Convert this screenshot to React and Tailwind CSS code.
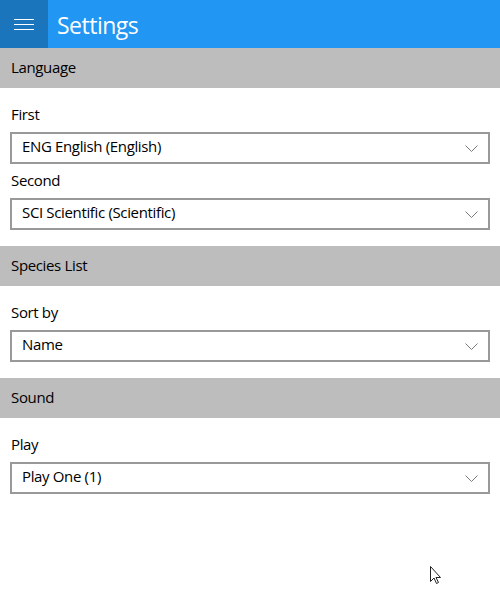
import React from 'react';

const font = { fontFamily: '"Open Sans", "Noto Sans", sans-serif' };

function Chevron() {
  return (
    <svg width="13" height="7" viewBox="0 0 13 7" className="shrink-0">
      <path d="M0.5 0.5 L6.5 6.5 L12.5 0.5" fill="none" stroke="#7a7a7a" strokeWidth="1" />
    </svg>
  );
}

function Select({ value }) {
  return (
    <div className="h-8 border-2 border-[#999999] flex items-center justify-between pl-[10px] pr-[10px] text-[15px] text-black">
      <span className="tracking-[-0.35px] mb-[3px]">{value}</span>
      <Chevron />
    </div>
  );
}

function Field({ label, value }) {
  return (
    <div className="flex flex-col">
      <div className="h-5 leading-[18px] text-[15px] text-black pl-px mb-[7px] tracking-[-0.35px]">{label}</div>
      <Select value={value} />
    </div>
  );
}

function Section({ title, fields }) {
  return (
    <div>
      <div className="h-10 bg-[#bdbdbd] flex items-center px-[11px] text-[15px] text-black tracking-[-0.35px]">
        <span className="mb-px">{title}</span>
      </div>
      <div className="pt-[17px] pb-4 px-[10px] flex flex-col gap-[7px]">
        {fields.map((f) => (
          <Field key={f.label} label={f.label} value={f.value} />
        ))}
      </div>
    </div>
  );
}

export default function App() {
  return (
    <div className="relative w-[500px] h-[609px] bg-white overflow-hidden" style={font}>
      <div className="h-12 bg-[#2196f3] flex items-center">
        <button className="w-12 h-12 bg-[#1b75bd] flex flex-col items-center justify-center gap-1">
          <span className="block w-5 h-px bg-white" />
          <span className="block w-5 h-px bg-white" />
          <span className="block w-5 h-px bg-white" />
        </button>
        <div className="ml-[9px] mt-[3px] text-[23px] text-white leading-none tracking-[-0.5px]">Settings</div>
      </div>

      <Section
        title="Language"
        fields={[
          { label: 'First', value: 'ENG English (English)' },
          { label: 'Second', value: 'SCI Scientific (Scientific)' },
        ]}
      />
      <Section title="Species List" fields={[{ label: 'Sort by', value: 'Name' }]} />
      <Section title="Sound" fields={[{ label: 'Play', value: 'Play One (1)' }]} />

      {/* mouse pointer */}
      <svg className="absolute left-[430px] top-[566px]" width="12" height="19" viewBox="0 0 12 19">
        <path
          d="M0.5 0.5 L0.5 15.5 L4 12 L6.5 17.5 L8.5 16.5 L6 11.5 L10.5 11.5 Z"
          fill="white"
          stroke="#222"
          strokeWidth="1"
          strokeLinejoin="miter"
        />
      </svg>
    </div>
  );
}
